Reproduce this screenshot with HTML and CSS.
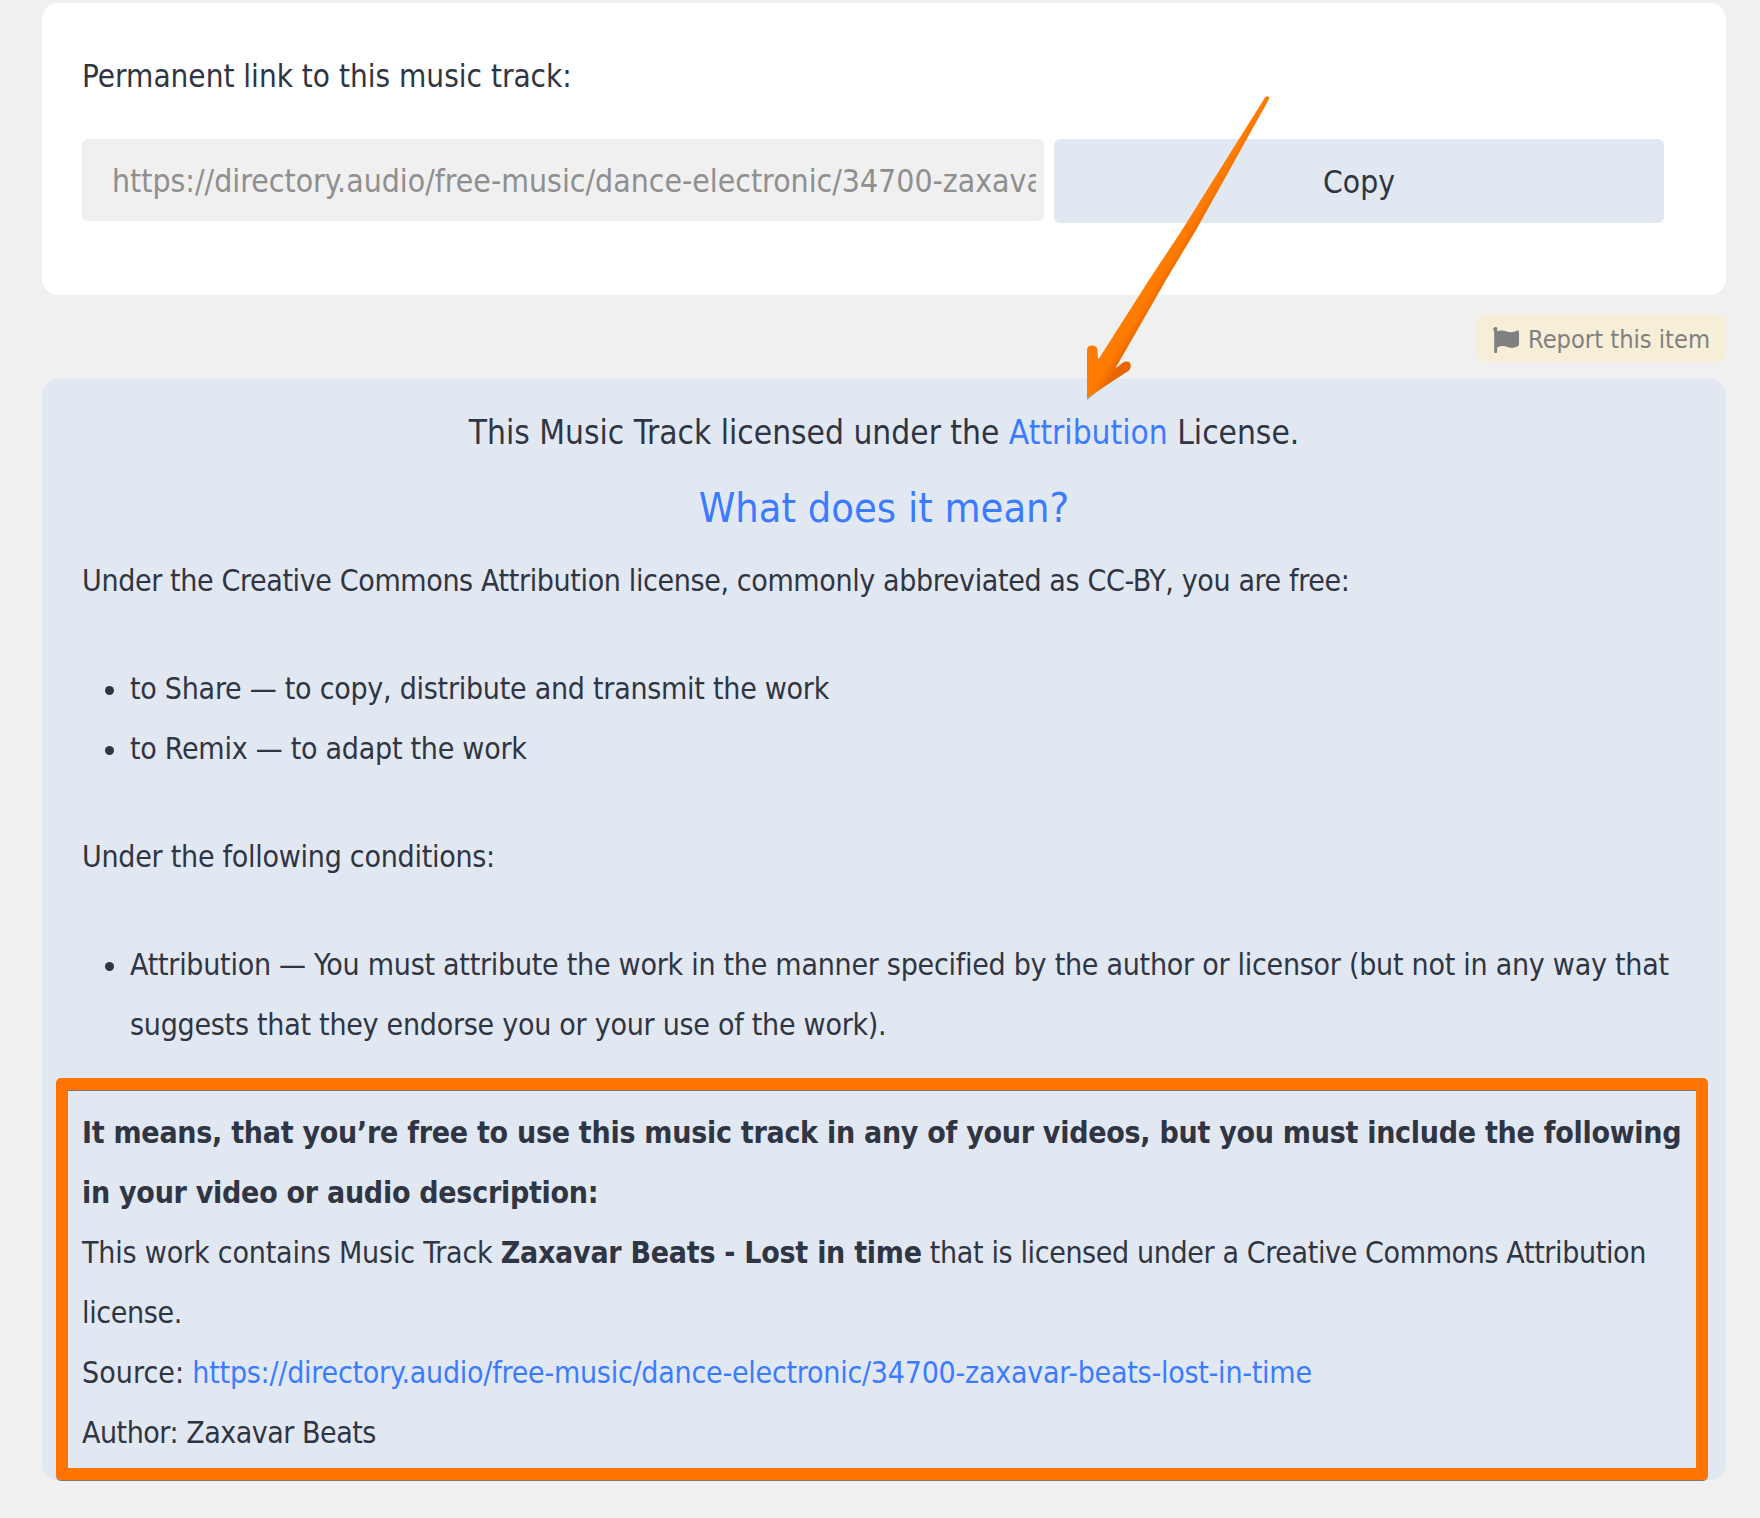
FILE: index.html
```html
<!DOCTYPE html>
<html lang="en">
<head>
    <meta charset="UTF-8">
    <meta name="viewport" content="width=device-width, initial-scale=1.0">
    <title>Zaxavar Beats - Lost in time</title>
    <link rel="stylesheet" href="styles.css">
</head>
<body>
    <div class="page">
        <div class="link-card">
            <p class="link-label">Permanent link to this music track:</p>
            <div class="link-row">
                <input class="link-input" type="text" readonly value="https://directory.audio/free-music/dance-electronic/34700-zaxavar-beats-lost-in-time">
                <button class="copy-btn" type="button">Copy</button>
            </div>
        </div>

        <div class="report-row">
            <a class="report-link" href="#">
                <svg class="flag-icon" viewBox="0 0 26 26" aria-hidden="true">
                    <path d="M2.6 0C1.2 0 .2 1 .2 2.3c0 .8.4 1.5 1 1.9V25c0 .6.5 1 1.1 1h.7c.6 0 1.1-.4 1.1-1v-4.600c1.900-.8 3.700-1.300 5.700-1.300 3.600 0 5.600 1.800 9 1.800 2.600 0 4.700-.9 6.300-1.900.5-.3.9-.8.9-1.400V4.800c0-1-1-1.600-1.900-1.200-2 .9-4 1.700-5.900 1.700-3.500 0-5.600-1.900-9.200-1.900-2 0-3.800.4-5.100 1 .1-.3.1-.6.1-.9C5 1 4 0 2.600 0z"/>
                </svg>
                Report this item
            </a>
        </div>

        <div class="license-card">
            <p class="license-line">This Music Track licensed under the <a href="#">Attribution</a> License.</p>
            <h2 class="license-title"><a href="#">What does it mean?</a></h2>
            <p>Under the Creative Commons Attribution license, commonly abbreviated as CC-BY, you are free:</p>
            <ul>
                <li>to Share — to copy, distribute and transmit the work</li>
                <li>to Remix — to adapt the work</li>
            </ul>
            <p class="conditions">Under the following conditions:</p>
            <ul>
                <li>Attribution — You must attribute the work in the manner specified by the author or licensor (but not in any way that suggests that they endorse you or your use of the work).</li>
            </ul>
            <div class="credit">
                <strong>It means, that you’re free to use this music track in any of your videos, but you must include the following in your video or audio description:</strong><br>
                <span class="credit-lead">This work contains Music Track</span> <strong>Zaxavar Beats - Lost in time</strong> that is licensed under a Creative Commons Attribution license.<br>
                <span class="credit-source">Source:</span> <a href="#">https://directory.audio/free-music/dance-electronic/34700-zaxavar-beats-lost-in-time</a><br>
                <span class="credit-author">Author: Zaxavar Beats</span>
            </div>
            <div class="credit-frame"></div>
        </div>

        <svg class="arrow" viewBox="0 0 1760 1518" aria-hidden="true">
            <defs>
                <linearGradient id="arrowFill" x1="1148.4" y1="274.9" x2="1167.3" y2="286.2" gradientUnits="userSpaceOnUse">
                    <stop offset="0" stop-color="#ff7c00"/>
                    <stop offset="0.5" stop-color="#ff7c00"/>
                    <stop offset="1" stop-color="#e86400"/>
                </linearGradient>
            </defs>
            <path class="arrow-shadow" d="M1087 399 L1087 351 L1123 370 Z"/>
            <path fill="url(#arrowFill)" d="M1265 97.500 Q1267 95.500 1269 97 Q1269.500 98 1268.500 100 L1196 230 L1166 280 L1115 369 L1123 362.500 Q1127 360.500 1130 363 Q1132 367 1129 370.500 L1087 398 L1087 350 Q1087 345.500 1092 345.500 Q1097 345.500 1097.500 350 L1098 360 L1149 280 L1182 230 Z"/>
        </svg>
    </div>
</body>
</html>
```

FILE: styles.css
```css
* {
    margin: 0;
    padding: 0;
    box-sizing: border-box;
}

body {
    font-family: 'DejaVu Sans', Verdana, sans-serif;
    font-stretch: condensed;
    font-size: 30px;
    line-height: 60px;
    letter-spacing: -0.37px;
    color: #2f3542;
    background: #f0f0f0;
}

a {
    color: #3b7cff;
    text-decoration: none;
}

strong {
    letter-spacing: -0.27px;
}

.page {
    position: relative;
    width: 1760px;
    height: 1518px;
    padding: 3px 34px 0 42px;
}

.link-card {
    height: 292px;
    padding: 43px 40px 0;
    background: #fff;
    border-radius: 16px;
}

.link-label {
    font-size: 31.2px;
    letter-spacing: 0;
}

.link-row {
    display: flex;
    align-items: flex-start;
    gap: 10px;
    margin-top: 33px;
}

.link-input {
    width: 962px;
    height: 82px;
    padding: 2px 8px 0 30px;
    border: none;
    border-radius: 6px;
    background: #f0f0f0;
    color: #8f8f8f;
    font: inherit;
    font-size: 31.7px;
    font-stretch: condensed;
    letter-spacing: 0;
    outline: none;
}

.copy-btn {
    width: 610px;
    height: 84px;
    padding-top: 2px;
    border: none;
    border-radius: 6px;
    background: #e2e8f2;
    color: #2f3542;
    font: inherit;
    font-size: 31.5px;
    font-stretch: condensed;
    letter-spacing: 0;
}

.report-row {
    display: flex;
    justify-content: flex-end;
    margin-top: 20px;
}

.report-link {
    display: flex;
    align-items: center;
    gap: 9px;
    height: 47px;
    padding: 2px 16px 0;
    border-radius: 8px;
    background: #f7eed8;
    color: #808080;
    font-size: 25.2px;
    letter-spacing: 0;
    line-height: 45px;
}

.flag-icon {
    width: 26px;
    height: 26px;
    fill: #808080;
}

.license-card {
    position: relative;
    height: 1101px;
    margin-top: 17px;
    padding: 24px 40px 0;
    background: #e2e8f2;
    border-radius: 16px;
}

.license-line {
    font-size: 33.2px;
    letter-spacing: 0;
    text-align: center;
}

.license-title {
    margin: 15px 0 13px;
    font-size: 41.2px;
    font-weight: normal;
    letter-spacing: 0;
    text-align: center;
}

.license-card ul {
    margin: 48px 0;
    padding-left: 48px;
    letter-spacing: -0.26px;
}

.conditions {
    letter-spacing: -0.26px;
}

.credit {
    margin-top: 46px;
}

.credit a {
    letter-spacing: -0.24px;
}

.credit-lead {
    letter-spacing: -0.18px;
}

.credit-source {
    letter-spacing: 0.06px;
}

.credit-author {
    letter-spacing: -0.48px;
}

/* orange frame drawn on top of the credit text */
.credit-frame {
    position: absolute;
    left: 14px;
    right: 18px;
    bottom: 0;
    height: 402px;
    border: 12px solid #ff7300;
    border-radius: 5px;
    box-shadow: 0 1px 0 #777, inset 0 1px 0 #777;
}

.arrow {
    position: absolute;
    top: 0;
    left: 0;
    width: 1760px;
    height: 1518px;
    pointer-events: none;
}

.arrow-shadow {
    fill: #777;
    transform: translate(0, 1px);
    opacity: 0.6;
}
```
